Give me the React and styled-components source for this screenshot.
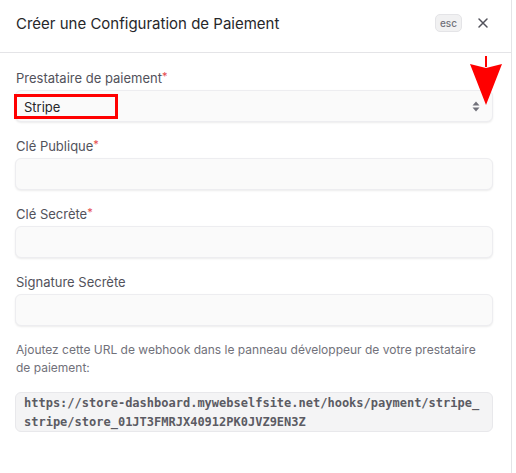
import React from 'react'
import styled, { createGlobalStyle } from 'styled-components';

const GlobalStyle = createGlobalStyle`
  html, body {
    margin: 0;
    padding: 0;
    background: #ffffff;
  }
  body {
    font-family: Inter, "Noto Sans", sans-serif;
    color: #3f3f46;
  }
`

const Modal = styled.div`
  width: 512px;
  height: 473px;
  background: #ffffff;
  border-right: 1px solid #e4e4e7;
  box-sizing: border-box;
  position: relative;
`

const Header = styled.div`
  height: 53px;
  box-sizing: border-box;
  display: flex;
  align-items: center;
  padding: 0 16px;
  border-bottom: 1px solid #e4e4e7;
`

const Title = styled.h2`
  flex: 1;
  margin: 0;
  margin-top: -6px;
  font-size: 15px;
  font-weight: 400;
  color: #27272a;
`

const EscBadge = styled.span`
  display: inline-flex;
  align-items: center;
  justify-content: center;
  width: 27px;
  height: 18px;
  margin-top: -6px;
  border-radius: 5px;
  background: #f1f1f2;
  border: 1px solid #e4e4e7;
  box-sizing: border-box;
  font-size: 10px;
  font-weight: 500;
  color: #71717a;
`

const CloseButton = styled.button`
  width: 24px;
  height: 24px;
  margin-left: 9px;
  margin-top: -6px;
  padding: 0;
  border: none;
  background: transparent;
  display: flex;
  align-items: center;
  justify-content: center;
  color: #52525b;
`

const Body = styled.div`
  padding: 15px 18px 0 15px;
  display: flex;
  flex-direction: column;
  gap: 14px;
`

const Field = styled.div`
  display: flex;
  flex-direction: column;
`

const Label = styled.label`
  height: 22px;
  line-height: 20px;
  padding-left: 1px;
  font-size: 13px;
  font-weight: 400;
  color: #52525b;
`

const Required = styled.span`
  color: #e5484d;
  font-size: 11px;
  vertical-align: top;
  line-height: 16px;
`

const InputBox = styled.div`
  position: relative;
  height: 32px;
  box-sizing: border-box;
  border-radius: 6px;
  background: #fafafa;
  border: 1px solid #ededf0;
  box-shadow: 0 1px 2px rgba(0, 0, 0, 0.08);
  display: flex;
  align-items: center;
  padding: 0 8px;
  font-size: 13px;
  color: #27272a;
`

const Highlight = styled.span`
  position: absolute;
  left: -2px;
  top: 3px;
  width: 104px;
  height: 25px;
  box-sizing: border-box;
  border: 3px solid #ff0000;
  display: flex;
  align-items: center;
  padding-left: 7px;
`

const Chevrons = styled.svg`
  position: absolute;
  right: 12px;
  top: 10px;
`

const Helper = styled.p`
  margin: 1px 0 0 1px;
  font-size: 12px;
  line-height: 18px;
  color: #71717a;
`

const CodeBox = styled.pre`
  margin: 0;
  padding: 1px 8px 0;
  height: 40px;
  box-sizing: border-box;
  border-radius: 6px;
  background: #f4f4f5;
  border: 1px solid #e8e8eb;
  font-family: "DejaVu Sans Mono", "Liberation Mono", monospace;
  font-size: 12px;
  line-height: 19px;
  font-weight: 600;
  color: #5b5b63;
  white-space: pre-wrap;
  word-break: break-all;
  margin-top: 1px;
`

const Arrow = styled.svg`
  position: absolute;
  left: 468px;
  top: 55px;
`

function App() {
  return (
    <>
      <GlobalStyle />
      <Modal>
        <Header>
          <Title>Créer une Configuration de Paiement</Title>
          <EscBadge>esc</EscBadge>
          <CloseButton>
            <svg width="12" height="12" viewBox="0 0 12 12" fill="none" stroke="currentColor" strokeWidth="1.5" strokeLinecap="round">
              <path d="M2 2 L10 10 M10 2 L2 10" />
            </svg>
          </CloseButton>
        </Header>
        <Body>
          <Field>
            <Label>Prestataire de paiement<Required>*</Required></Label>
            <InputBox>
              <Highlight>Stripe</Highlight>
              <Chevrons width="8" height="11" viewBox="0 0 8 11">
                <path d="M4 0.5 L7.5 4.5 L0.5 4.5 Z M4 10.5 L7.5 6.5 L0.5 6.5 Z" fill="#71717a" />
              </Chevrons>
            </InputBox>
          </Field>
          <Field>
            <Label>Clé Publique<Required>*</Required></Label>
            <InputBox />
          </Field>
          <Field>
            <Label>Clé Secrète<Required>*</Required></Label>
            <InputBox />
          </Field>
          <Field>
            <Label>Signature Secrète</Label>
            <InputBox />
          </Field>
          <Helper>
            Ajoutez cette URL de webhook dans le panneau développeur de votre prestataire de paiement:
          </Helper>
          <CodeBox>https://store-dashboard.mywebselfsite.net/hooks/payment/stripe_stripe/store_01JT3FMRJX40912PK0JVZ9EN3Z</CodeBox>
        </Body>
        <Arrow width="36" height="52" viewBox="0 0 36 52">
          <line x1="18" y1="1" x2="18" y2="12" stroke="#ff0000" strokeWidth="2" />
          <polygon points="2,9 18,13 34,9 18,50" fill="#ff0000" />
        </Arrow>
      </Modal>
    </>
  );
}

export default App;
